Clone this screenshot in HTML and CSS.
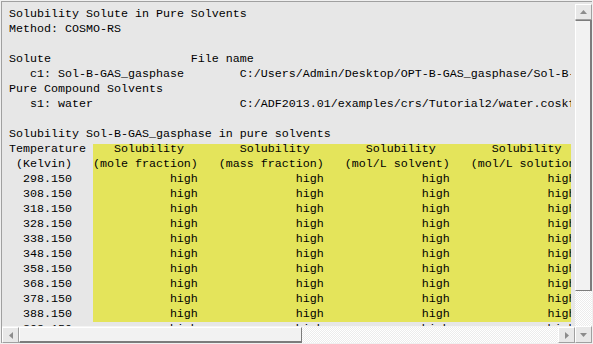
FILE: index.html
```html
<!DOCTYPE html>
<html lang="en">
<head>
  <meta charset="utf-8">
  <title>Solubility Solute in Pure Solvents</title>
  <link rel="stylesheet" href="styles.css">
</head>
<body>
  <div class="window">
    <div class="viewport">
      <div class="report">
        <div class="line">Solubility Solute in Pure Solvents</div>
        <div class="line">Method: COSMO-RS</div>
        <div class="line"></div>
        <div class="line">Solute                    File name</div>
        <div class="line">   c1: Sol-B-GAS_gasphase        C:/Users/Admin/Desktop/OPT-B-GAS_gasphase/Sol-B-GAS_gasphase.coskf</div>
        <div class="line">Pure Compound Solvents</div>
        <div class="line">   s1: water                     C:/ADF2013.01/examples/crs/Tutorial2/water.coskf</div>
        <div class="line"></div>
        <div class="line">Solubility Sol-B-GAS_gasphase in pure solvents</div>

        <div class="row">
          <div class="cell temp-title">Temperature</div>
          <div class="cell sol head first">Solubility</div>
          <div class="cell sol head first">Solubility</div>
          <div class="cell sol head first">Solubility</div>
          <div class="cell sol head first">Solubility</div>
        </div>
        <div class="row">
          <div class="cell temp">(Kelvin)</div>
          <div class="cell sol">(mole fraction)</div>
          <div class="cell sol">(mass fraction)</div>
          <div class="cell sol">(mol/L solvent)</div>
          <div class="cell sol">(mol/L solution)</div>
        </div>
      </div>
    </div>

    <div class="vscroll">
      <div class="btn">
        <svg width="7" height="4" viewBox="0 0 7 4"><polygon points="3.5,0 7,4 0,4" fill="#8c8c8c"/></svg>
      </div>
      <div class="thumb"></div>
      <div class="track"></div>
      <div class="btn">
        <svg width="7" height="4" viewBox="0 0 7 4"><polygon points="0,0 7,0 3.5,4" fill="#8c8c8c"/></svg>
      </div>
    </div>

    <div class="hscroll">
      <div class="btn">
        <svg width="4" height="7" viewBox="0 0 4 7"><polygon points="4,0 4,7 0,3.5" fill="#8c8c8c"/></svg>
      </div>
      <div class="thumb"></div>
      <div class="track"></div>
      <div class="btn">
        <svg width="4" height="7" viewBox="0 0 4 7"><polygon points="0,0 4,3.5 0,7" fill="#8c8c8c"/></svg>
      </div>
    </div>
  </div>

  <script>
    // fill the temperature rows
    var report = document.querySelector(".report");
    for (var t = 298; t <= 398; t += 10) {
      var row = document.createElement("div");
      row.className = t == 398 ? "row cut" : "row";
      var html = '<div class="cell temp">' + t + '.150</div>';
      for (var i = 0; i < 4; i++) {
        html += '<div class="cell sol">high</div>';
      }
      row.innerHTML = html;
      report.appendChild(row);
    }
  </script>
</body>
</html>
```

FILE: styles.css
```css
body {
  margin: 0;
  padding: 1px;
  background-color: #f0f0f0;
}
.window {
  width: 591px;
  height: 342px;
  box-sizing: border-box;
  border-top: 1px solid #a0a0a0;
  border-left: 1px solid #a0a0a0;
  background-color: #e7e7e7;
  display: grid;
  grid-template-columns: 1fr 17px;
  grid-template-rows: 1fr 17px;
}
.viewport {
  overflow: hidden;
  padding: 5px 0 0 7px;
  font-family: "Liberation Mono", "Courier New", monospace;
  font-size: 11.67px;
  line-height: 15px;
  color: #000;
}
.report {
  overflow: hidden;
  margin-right: 4px;
  height: 100%;
}
.line {
  height: 15px;
  white-space: pre;
}
.row {
  display: grid;
  grid-template-columns: 12ch repeat(4, 18ch);
  height: 15px;
  white-space: pre;
}
.cell {
  text-align: right;
  padding-right: 3ch;
}
.temp-title {
  text-align: left;
  padding-right: 0;
}
.sol {
  background-color: #e4e45b;
}
.sol.head {
  text-align: left;
  padding-left: 3ch;
  padding-right: 0;
}
.sol.first {
  background: linear-gradient(to bottom, transparent 2px, #e4e45b 2px);
}
.cut .sol {
  background: none;
}
.btn {
  box-sizing: border-box;
  display: flex;
  align-items: center;
  justify-content: center;
  background-color: #e8e8e8;
  border: 1px solid;
  border-color: #fff #a0a0a0 #a0a0a0 #fff;
}
.track {
  flex: 1;
  background: repeating-conic-gradient(#fff 0 25%, #ececec 0 50%) 0 0 / 2px 2px;
}
.vscroll {
  grid-row: 1 / 3;
  grid-column: 2;
  display: flex;
  flex-direction: column;
  padding-top: 2px;
}
.vscroll .btn {
  height: 16px;
}
.vscroll .btn:last-child {
  height: 17px;
}
.vscroll .thumb {
  flex: 0 0 271px;
  box-sizing: border-box;
  background-color: #f2f2f2;
  border-top: 1px solid #7c7c7c;
  border-bottom: 1px solid #7c7c7c;
  border-left: 1px solid #fff;
  border-right: 2px solid #7c7c7c;
}
.hscroll {
  grid-row: 2;
  grid-column: 1;
  display: flex;
  border-top: 1px solid #f4f4f4;
}
.hscroll .btn {
  width: 17px;
}
.hscroll .thumb {
  flex: 0 0 283px;
  box-sizing: border-box;
  background-color: #f2f2f2;
  border-left: 1px solid #fff;
  border-top: 1px solid #fff;
  border-right: 1px solid #7c7c7c;
  border-bottom: 2px solid #7c7c7c;
}
```
